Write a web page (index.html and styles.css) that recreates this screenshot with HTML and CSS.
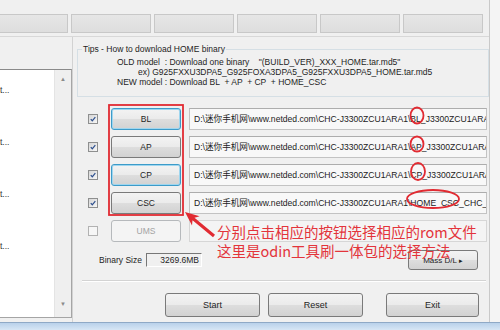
FILE: index.html
```html
<!DOCTYPE html>
<html lang="zh">
<head>
  <meta charset="utf-8" />
  <title>Odin3 - 一体包刷机选择</title>
  <link rel="stylesheet" href="styles.css">
</head>
<body>
  <div class="window">
    <div class="panel">
      <div class="head">
        <div class="ports">
          <div class="port first"></div>
          <div class="port"></div>
          <div class="port"></div>
          <div class="port"></div>
          <div class="port"></div>
          <div class="port"></div>
        </div>
      </div>
      <div class="main">
        <div class="logpanel">
          <div class="log">
            <div class="lines">
              <p>t...</p>
              <p>t...</p>
              <p>t...</p>
              <p>t...</p>
            </div>
            <div class="scroll"><span>&#9650;</span><span>&#9660;</span></div>
          </div>
        </div>
        <div class="work">
          <fieldset class="tips">
            <legend>Tips - How to download HOME binary</legend>
            <div class="tip-lines">
              <p>OLD model  : Download one binary    "(BUILD_VER)_XXX_HOME.tar.md5"</p>
              <p class="ex">ex) G925FXXU3DPA5_G925FOXA3DPA5_G925FXXU3DPA5_HOME.tar.md5</p>
              <p>NEW model : Download BL  + AP  + CP  + HOME_CSC</p>
            </div>
          </fieldset>

          <div class="files">
            <div class="row">
              <span class="check on"><svg viewBox="0 0 10 10"><path d="M2.2 5.2 L4.1 7.2 L7.9 2.6"/></svg></span>
              <button class="btn focus">BL</button>
              <div class="path">D:\迷你手机网\www.netded.com\CHC-J3300ZCU1ARA1\BL_J3300ZCU1ARA1_CL12945678_QB8889999_REV00_user_low_ship.tar.md5</div>
            </div>
            <div class="row">
              <span class="check on"><svg viewBox="0 0 10 10"><path d="M2.2 5.2 L4.1 7.2 L7.9 2.6"/></svg></span>
              <button class="btn">AP</button>
              <div class="path">D:\迷你手机网\www.netded.com\CHC-J3300ZCU1ARA1\AP_J3300ZCU1ARA1_CL12945678_QB8889999_REV00_user_low_ship.tar.md5</div>
            </div>
            <div class="row">
              <span class="check on"><svg viewBox="0 0 10 10"><path d="M2.2 5.2 L4.1 7.2 L7.9 2.6"/></svg></span>
              <button class="btn focus">CP</button>
              <div class="path">D:\迷你手机网\www.netded.com\CHC-J3300ZCU1ARA1\CP_J3300ZCU1ARA1_CL12945678_QB8889999_REV00_user_low_ship.tar.md5</div>
            </div>
            <div class="row">
              <span class="check on"><svg viewBox="0 0 10 10"><path d="M2.2 5.2 L4.1 7.2 L7.9 2.6"/></svg></span>
              <button class="btn">CSC</button>
              <div class="path">D:\迷你手机网\www.netded.com\CHC-J3300ZCU1ARA1\HOME_CSC_CHC_J3300CHC1ARA1_CL12945678_QB8889999_REV00_user_low_ship.tar.md5</div>
            </div>
            <div class="row">
              <span class="check"></span>
              <button class="btn off">UMS</button>
              <div class="path off"></div>
            </div>
          </div>

          <div class="size-row">
            <span class="size-label">Binary Size</span>
            <span class="size-box">3269.6MB</span>
            <button class="btn mass">Mass D/L <span class="tri">&#9656;</span></button>
          </div>

          <div class="sep"></div>

          <div class="actions">
            <button class="btn big">Start</button>
            <button class="btn big">Reset</button>
            <button class="btn big exit">Exit</button>
          </div>
        </div>
      </div>
    </div>
    <div class="frame"></div>

    <svg class="marks" width="500" height="330" viewBox="0 0 500 330">
      <rect x="109" y="105" width="74" height="110" />
      <ellipse cx="417" cy="115.5" rx="6.5" ry="8" />
      <ellipse cx="417" cy="144" rx="6.5" ry="7.5" />
      <ellipse cx="418" cy="171.5" rx="7" ry="8.5" />
      <ellipse cx="433" cy="199" rx="26" ry="9" />
      <polygon class="arrow" points="185,212 199.6,216.3 194.5,217.8 215,234.8 213,237.2 192.5,220.2 192,225.5" />
    </svg>
    <div class="note">分别点击相应的按钮选择相应的rom文件<br>这里是odin工具刷一体包的选择方法</div>
  </div>
</body>
</html>
```

FILE: styles.css
```css
* { box-sizing: border-box; }
body { margin: 0; background: #f4f4f4; font-family: "Liberation Sans", "Noto Sans CJK SC", sans-serif; font-size: 8.5px; color: #1e1e1e; }
p { margin: 0; }

.window { position: relative; width: 500px; height: 330px; overflow: hidden; display: flex; flex-direction: column; background: #f4f4f4; }
.panel { width: 490px; height: 322px; flex: none; background: #f0f0f0; border-right: 1px solid #c9c9c9; display: flex; flex-direction: column; }

/* port strip */
.head { height: 37px; flex: none; padding-top: 14px; border-bottom: 1px solid #d8d8d8; }
.ports { display: flex; gap: 3px; }
.port { width: 80px; height: 19px; background: linear-gradient(#e6e6e6, #dedede); border: 1px solid #c8c8c8; }
.port.first { width: 68px; border-left: none; }

.main { flex: 1; display: flex; min-width: 0; }

/* log */
.logpanel { width: 73px; flex: none; padding-top: 32px; border-right: 1px solid #d2d2d2; }
.log { height: 249px; display: flex; background: #fff; border: 1px solid #a5a5a5; border-left: none; border-top-color: #8a8a8a; }
.lines { flex: 1; padding-top: 15px; overflow: hidden; }
.lines p { line-height: 10px; margin-bottom: 42px; color: #333; }
.scroll { width: 17px; background: #efefef; border-left: 1px solid #e4e4e4; display: flex; flex-direction: column; justify-content: space-between; align-items: center; padding: 6px 0 10px; font-size: 6px; color: #8a8a8a; }

/* right side */
.work { flex: 1; min-width: 0; padding: 7px 0 0 4px; display: flex; flex-direction: column; }
.tips { margin: 0; min-width: 0; border: 1px solid #d5dfe5; padding: 3px 0 9px 4px; }
.tips legend { padding: 0 1px; line-height: 10px; }
.tip-lines { margin-left: 35px; }
.tip-lines p { line-height: 10px; white-space: pre; }
.tip-lines .ex { margin-left: 21px; }

.files { margin-top: 11px; display: flex; flex-direction: column; gap: 6px; }
.row { height: 22px; display: flex; align-items: center; padding-left: 11px; }

.check { width: 10px; height: 10px; flex: none; margin-right: 13px; border: 1px solid #8e8f8f; background: linear-gradient(135deg, #d6d6d6, #f7f7f7); display: flex; }
.check svg { width: 8px; height: 8px; }
.check path { fill: none; stroke: #2d4f8e; stroke-width: 1.5; }
.row .check:not(.on) { border-color: #b2b2b2; background: #f6f6f6; }

.btn { font: inherit; color: #1e1e1e; padding: 0; border: 1px solid #7a7a7a; border-radius: 3px; background: linear-gradient(#f3f3f3 0%, #ebebeb 48%, #dddddd 52%, #d2d2d2 100%); }
.row .btn { width: 70px; height: 22px; flex: none; margin-right: 8px; }
.btn.focus { border-color: #3d9bc9; box-shadow: inset 0 0 0 1px #9fd6ef; }
.btn.off { color: #a3a3a3; border-color: #b6b9bc; background: #f4f4f4; }

.path { flex: 1; min-width: 0; height: 22px; margin-right: 2px; padding-left: 4px; line-height: 20px; font-size: 8.6px; background: #f8f8f8; border: 1px solid #c3c3c3; border-top-color: #adadad; white-space: nowrap; overflow: hidden; color: #222; }
.path.off { background: #f4f4f4; border-color: #d6d6d6; }

.size-row { margin-top: 8px; height: 20px; display: flex; align-items: center; padding-left: 22px; }
.size-label { margin-right: 4px; }
.size-box { width: 56px; height: 14px; line-height: 13px; text-align: right; padding-right: 2px; border: 1px solid #fff; border-top-color: #777; border-left-color: #777; }
.btn.mass { margin-left: auto; margin-right: 11px; width: 70px; height: 20px; font-size: 8px; }
.tri { font-size: 7px; }

.sep { margin: 10px 3px 0 5px; height: 2px; border-top: 1px solid #d3d3d3; border-bottom: 1px solid #fff; }

.actions { margin-top: 11px; display: flex; gap: 8px; padding-left: 88px; }
.btn.big { width: 95px; height: 24px; font-size: 9px; }
.btn.exit { margin-left: 15px; width: 93px; }

.frame { flex: 1; background: linear-gradient(#b9d1ea, #d7e6f5); border-top: 1px solid #8fa9c6; }

/* annotation layer */
.marks { position: absolute; left: 0; top: 0; pointer-events: none; }
.marks rect, .marks ellipse { fill: none; stroke: #e12b32; stroke-width: 1.8; }
.marks .arrow { fill: #e12b32; }
.note { position: absolute; left: 217px; top: 222px; font-family: "Noto Sans CJK SC", sans-serif; font-size: 14.5px; line-height: 19px; color: #e3343b; white-space: nowrap; }
```
